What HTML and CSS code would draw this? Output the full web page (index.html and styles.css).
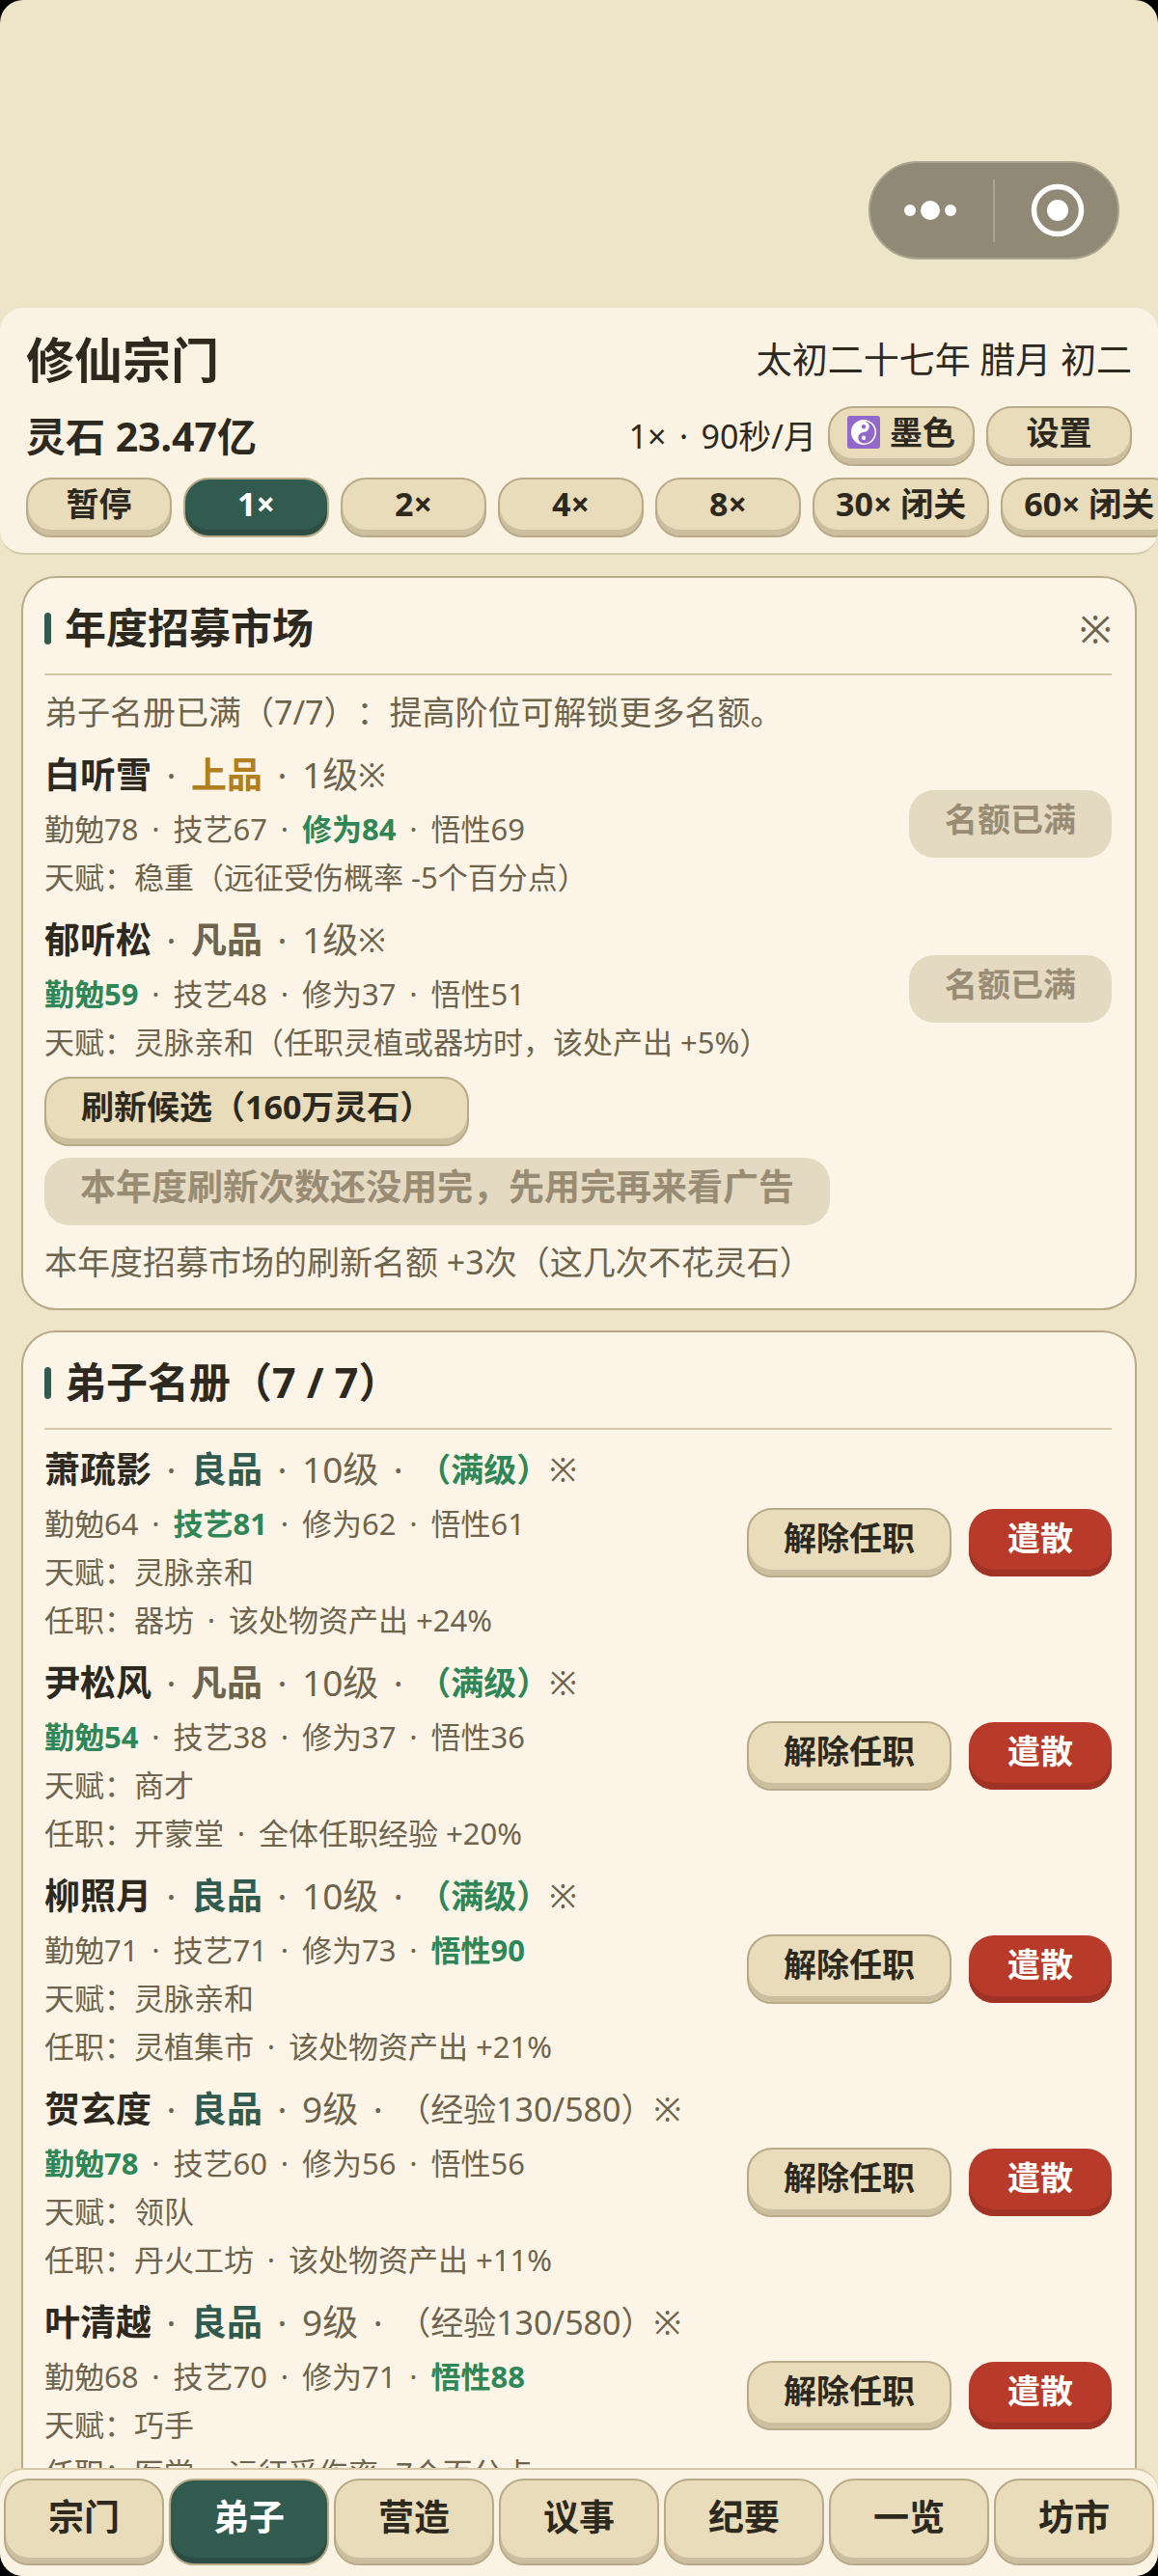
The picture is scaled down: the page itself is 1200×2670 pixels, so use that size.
FILE: index.html
```html
<!DOCTYPE html>
<html lang="zh-CN">
  <head>
    <meta charset="UTF-8">
    <meta name="viewport" content="width=device-width, initial-scale=1">
    <title>修仙宗门</title>
    <link rel="stylesheet" href="styles.css">
  </head>
  <body>
    <div class="app">
      <div class="system-bar">
        <div class="capsule">
          <button class="capsule-btn" aria-label="更多">
            <svg width="60" height="60" viewBox="0 0 60 60" fill="#fff">
              <circle cx="7" cy="30" r="6"/>
              <circle cx="28" cy="30" r="10"/>
              <circle cx="49" cy="30" r="6"/>
            </svg>
          </button>
          <span class="capsule-line"></span>
          <button class="capsule-btn" aria-label="关闭">
            <svg width="60" height="60" viewBox="0 0 60 60">
              <circle cx="31" cy="30" r="24.5" fill="none" stroke="#fff" stroke-width="5.5"/>
              <circle cx="31" cy="30" r="11" fill="#fff"/>
            </svg>
          </button>
        </div>
      </div>

      <header class="header">
        <div class="header-row title-row">
          <h1>修仙宗门</h1>
          <span class="date">太初二十七年 腊月 初二</span>
        </div>
        <div class="header-row">
          <strong class="money">灵石 23.47亿</strong>
          <div class="header-tools">
            <span class="pace">1×<i>·</i>90秒/月</span>
            <button class="btn small">
              <svg class="yinyang" viewBox="0 0 34 34">
                <rect width="34" height="34" rx="3" fill="#9268cb"/>
                <circle cx="17" cy="17" r="13" fill="#fff"/>
                <path d="M17 5.500a11.500 11.500 0 0 1 0 23a5.750 5.750 0 0 1 0-11.500a5.750 5.750 0 0 0 0-11.500z" fill="#9268cb"/>
                <circle cx="17" cy="11.250" r="2.200" fill="#9268cb"/>
                <circle cx="17" cy="22.750" r="2.200" fill="#fff"/>
              </svg>
              墨色
            </button>
            <button class="btn small">设置</button>
          </div>
        </div>
        <div class="speeds">
          <button class="btn small">暂停</button>
          <button class="btn small active">1×</button>
          <button class="btn small">2×</button>
          <button class="btn small">4×</button>
          <button class="btn small">8×</button>
          <button class="btn small">30× 闭关</button>
          <button class="btn small">60× 闭关</button>
        </div>
      </header>

      <main class="content">
        <section class="card">
          <div class="card-head">
            <h2>年度招募市场</h2>
            <button class="mark head-mark">※</button>
          </div>
          <p class="note">弟子名册已满（7/7）：提高阶位可解锁更多名额。</p>

          <div class="person">
            <div class="info">
              <div class="name-line"><b>白听雪</b><i>·</i><b class="top">上品</b><i>·</i>1级<button class="mark">※</button></div>
              <p>勤勉78<i>·</i>技艺67<i>·</i><b class="best">修为84</b><i>·</i>悟性69</p>
              <p>天赋：稳重（远征受伤概率 -5个百分点）</p>
            </div>
            <button class="btn" disabled>名额已满</button>
          </div>
          <div class="person">
            <div class="info">
              <div class="name-line"><b>郁听松</b><i>·</i><b class="common">凡品</b><i>·</i>1级<button class="mark">※</button></div>
              <p><b class="best">勤勉59</b><i>·</i>技艺48<i>·</i>修为37<i>·</i>悟性51</p>
              <p>天赋：灵脉亲和（任职灵植或器坊时，该处产出 +5%）</p>
            </div>
            <button class="btn" disabled>名额已满</button>
          </div>

          <div class="market-actions">
            <button class="btn">刷新候选（160万灵石）</button>
            <button class="btn ad" disabled>本年度刷新次数还没用完，先用完再来看广告</button>
          </div>
          <p class="note">本年度招募市场的刷新名额 +3次（这几次不花灵石）</p>
        </section>

        <section class="card">
          <div class="card-head">
            <h2>弟子名册（7 / 7）</h2>
          </div>

          <div class="person">
            <div class="info">
              <div class="name-line"><b>萧疏影</b><i>·</i><b class="good">良品</b><i>·</i>10级<i>·</i><b class="exp best">（满级）</b><button class="mark">※</button></div>
              <p>勤勉64<i>·</i><b class="best">技艺81</b><i>·</i>修为62<i>·</i>悟性61</p>
              <p>天赋：灵脉亲和</p>
              <p>任职：器坊<i>·</i>该处物资产出 +24%</p>
            </div>
            <button class="btn">解除任职</button>
            <button class="btn danger">遣散</button>
          </div>
          <div class="person">
            <div class="info">
              <div class="name-line"><b>尹松风</b><i>·</i><b class="common">凡品</b><i>·</i>10级<i>·</i><b class="exp best">（满级）</b><button class="mark">※</button></div>
              <p><b class="best">勤勉54</b><i>·</i>技艺38<i>·</i>修为37<i>·</i>悟性36</p>
              <p>天赋：商才</p>
              <p>任职：开蒙堂<i>·</i>全体任职经验 +20%</p>
            </div>
            <button class="btn">解除任职</button>
            <button class="btn danger">遣散</button>
          </div>
          <div class="person">
            <div class="info">
              <div class="name-line"><b>柳照月</b><i>·</i><b class="good">良品</b><i>·</i>10级<i>·</i><b class="exp best">（满级）</b><button class="mark">※</button></div>
              <p>勤勉71<i>·</i>技艺71<i>·</i>修为73<i>·</i><b class="best">悟性90</b></p>
              <p>天赋：灵脉亲和</p>
              <p>任职：灵植集市<i>·</i>该处物资产出 +21%</p>
            </div>
            <button class="btn">解除任职</button>
            <button class="btn danger">遣散</button>
          </div>
          <div class="person">
            <div class="info">
              <div class="name-line"><b>贺玄度</b><i>·</i><b class="good">良品</b><i>·</i>9级<i>·</i><span class="exp">（经验130/580）</span><button class="mark">※</button></div>
              <p><b class="best">勤勉78</b><i>·</i>技艺60<i>·</i>修为56<i>·</i>悟性56</p>
              <p>天赋：领队</p>
              <p>任职：丹火工坊<i>·</i>该处物资产出 +11%</p>
            </div>
            <button class="btn">解除任职</button>
            <button class="btn danger">遣散</button>
          </div>
          <div class="person">
            <div class="info">
              <div class="name-line"><b>叶清越</b><i>·</i><b class="good">良品</b><i>·</i>9级<i>·</i><span class="exp">（经验130/580）</span><button class="mark">※</button></div>
              <p>勤勉68<i>·</i>技艺70<i>·</i>修为71<i>·</i><b class="best">悟性88</b></p>
              <p>天赋：巧手</p>
              <p>任职：医堂<i>·</i>远征受伤率 -7个百分点</p>
            </div>
            <button class="btn">解除任职</button>
            <button class="btn danger">遣散</button>
          </div>
        </section>
      </main>

      <nav class="tabs">
        <button class="btn tab">宗门</button>
        <button class="btn tab active">弟子</button>
        <button class="btn tab">营造</button>
        <button class="btn tab">议事</button>
        <button class="btn tab">纪要</button>
        <button class="btn tab">一览</button>
        <button class="btn tab">坊市</button>
      </nav>
    </div>
  </body>
</html>
```

FILE: styles.css
```css
* {
  box-sizing: border-box;
}
html {
  background: #000;
}
body {
  margin: 0;
  color: #2d291f;
  font-family: "Noto Sans", "Noto Sans CJK SC", sans-serif;
  font-size: 34px;
  text-spacing-trim: space-all;
}
h1,
h2,
p {
  margin: 0;
}
button {
  font-family: inherit;
  color: inherit;
  padding: 0;
  border: none;
  background: none;
  cursor: pointer;
}
.app {
  display: flex;
  flex-direction: column;
  height: 100vh;
  overflow: hidden;
  border-radius: 24px;
  background: #eee5c8;
}

/* top area with the mini program capsule */
.system-bar {
  display: flex;
  justify-content: flex-end;
  flex-shrink: 0;
  padding: 167px 40px 50px;
}
.capsule {
  display: flex;
  align-items: center;
  width: 260px;
  height: 102px;
  border: 2px solid #aaa48e;
  border-radius: 51px;
  background: #8f8976;
}
.capsule-btn {
  display: flex;
  flex: 1;
  justify-content: center;
}
.capsule-line {
  width: 2px;
  height: 65px;
  background: #aaa48e;
}

/* header */
.header {
  flex-shrink: 0;
  padding: 22px 27px 16px;
  border-bottom: 2px solid #d5c9a7;
  border-radius: 24px;
  background: #faf3e4;
  overflow: hidden;
}
.header-row {
  display: flex;
  align-items: center;
  justify-content: space-between;
  height: 63px;
  margin-bottom: 12px;
}
.title-row {
  margin-bottom: 16px;
}
h1 {
  font-size: 50px;
  line-height: 60px;
}
.date {
  font-size: 37px;
  line-height: 60px;
}
.money {
  font-size: 41px;
  line-height: 60px;
}
.header-tools {
  display: flex;
  align-items: center;
  gap: 12px;
}
.pace {
  line-height: 60px;
}
.speeds {
  display: flex;
  gap: 12px;
}
.yinyang {
  width: 34px;
  height: 34px;
  margin-right: 10px;
}

/* buttons */
.btn {
  display: flex;
  align-items: center;
  justify-content: center;
  flex-shrink: 0;
  min-width: 148px;
  height: 72px;
  padding: 0 36px 10px;
  border: 2px solid #b8a987;
  border-radius: 26px;
  background: #e8dcba;
  box-shadow: inset 0 -6px 0 #cbbf9f;
  font-size: 34px;
  font-weight: bold;
  line-height: 50px;
  white-space: nowrap;
}
.btn.small {
  min-width: 151px;
  height: 62px;
  padding: 0 18px 8px;
}
.speeds .btn {
  padding: 0 22px 8px;
}
.btn.active {
  background: #325b4f;
  box-shadow: inset 0 -6px 0 #2b4d43;
  color: #fff;
}
.btn.danger {
  height: 70px;
  border: none;
  background: #b83a2a;
  box-shadow: inset 0 -7px 0 #a03226;
  color: #fff;
}
.btn:disabled {
  height: 70px;
  padding: 0 37px 10px;
  border: none;
  background: #e4dac2;
  box-shadow: none;
  color: #988c74;
}
.btn.ad {
  font-size: 37px;
}

/* cards */
.content {
  display: flex;
  flex: 1;
  flex-direction: column;
  gap: 21px;
  min-height: 0;
  padding: 22px 22px 0;
  overflow: hidden;
}
.card {
  flex-shrink: 0;
  padding: 22px 24px 22px 22px;
  border: 2px solid #b8a987;
  border-radius: 36px;
  background: #fcf5e7;
}
.card-head {
  display: flex;
  align-items: center;
  justify-content: space-between;
  height: 79px;
  margin-bottom: 12px;
  padding-bottom: 17px;
  border-bottom: 2px solid #d5c9a7;
}
h2 {
  display: flex;
  align-items: center;
  gap: 14px;
  font-size: 43px;
  line-height: 60px;
}
h2::before {
  content: "";
  width: 7px;
  height: 33px;
  border-radius: 4px;
  background: #325b4f;
}
.note {
  color: #6e644d;
  line-height: 52px;
}
.person {
  display: flex;
  align-items: center;
  gap: 18px;
  margin-bottom: 11px;
}
.note + .person {
  margin-top: 10px;
}
.info {
  flex: 1;
  color: #6e644d;
  font-size: 31px;
  line-height: 50px;
}
.info i,
.pace i {
  display: inline-block;
  width: 36px;
  font-style: normal;
  text-align: center;
}
.name-line {
  display: flex;
  align-items: center;
  height: 60px;
  padding-bottom: 3px;
  font-size: 37px;
}
.name-line b:first-child {
  color: #2d291f;
}
.name-line i {
  width: 41px;
}
.mark {
  color: #6e644d;
  font-size: 34px;
}
.head-mark {
  font-size: 40px;
}
.name-line .exp {
  font-size: 34px;
}
.top {
  color: #b27f1e;
}
.good {
  color: #325b4f;
}
.common {
  color: #6e644d;
}
.best {
  color: #2f8657;
}
.market-actions {
  display: flex;
  flex-direction: column;
  align-items: flex-start;
  gap: 12px;
  margin-bottom: 12px;
}

/* bottom tabs */
.tabs {
  display: flex;
  flex-shrink: 0;
  gap: 5px;
  padding: 9px 4px 11px;
  border-top: 2px solid #d5c9a7;
  border-radius: 24px;
  background: #faf3e4;
}
.tab {
  flex: 1;
  min-width: 0;
  height: 90px;
  padding: 0 0 10px;
  font-size: 37px;
}
```
